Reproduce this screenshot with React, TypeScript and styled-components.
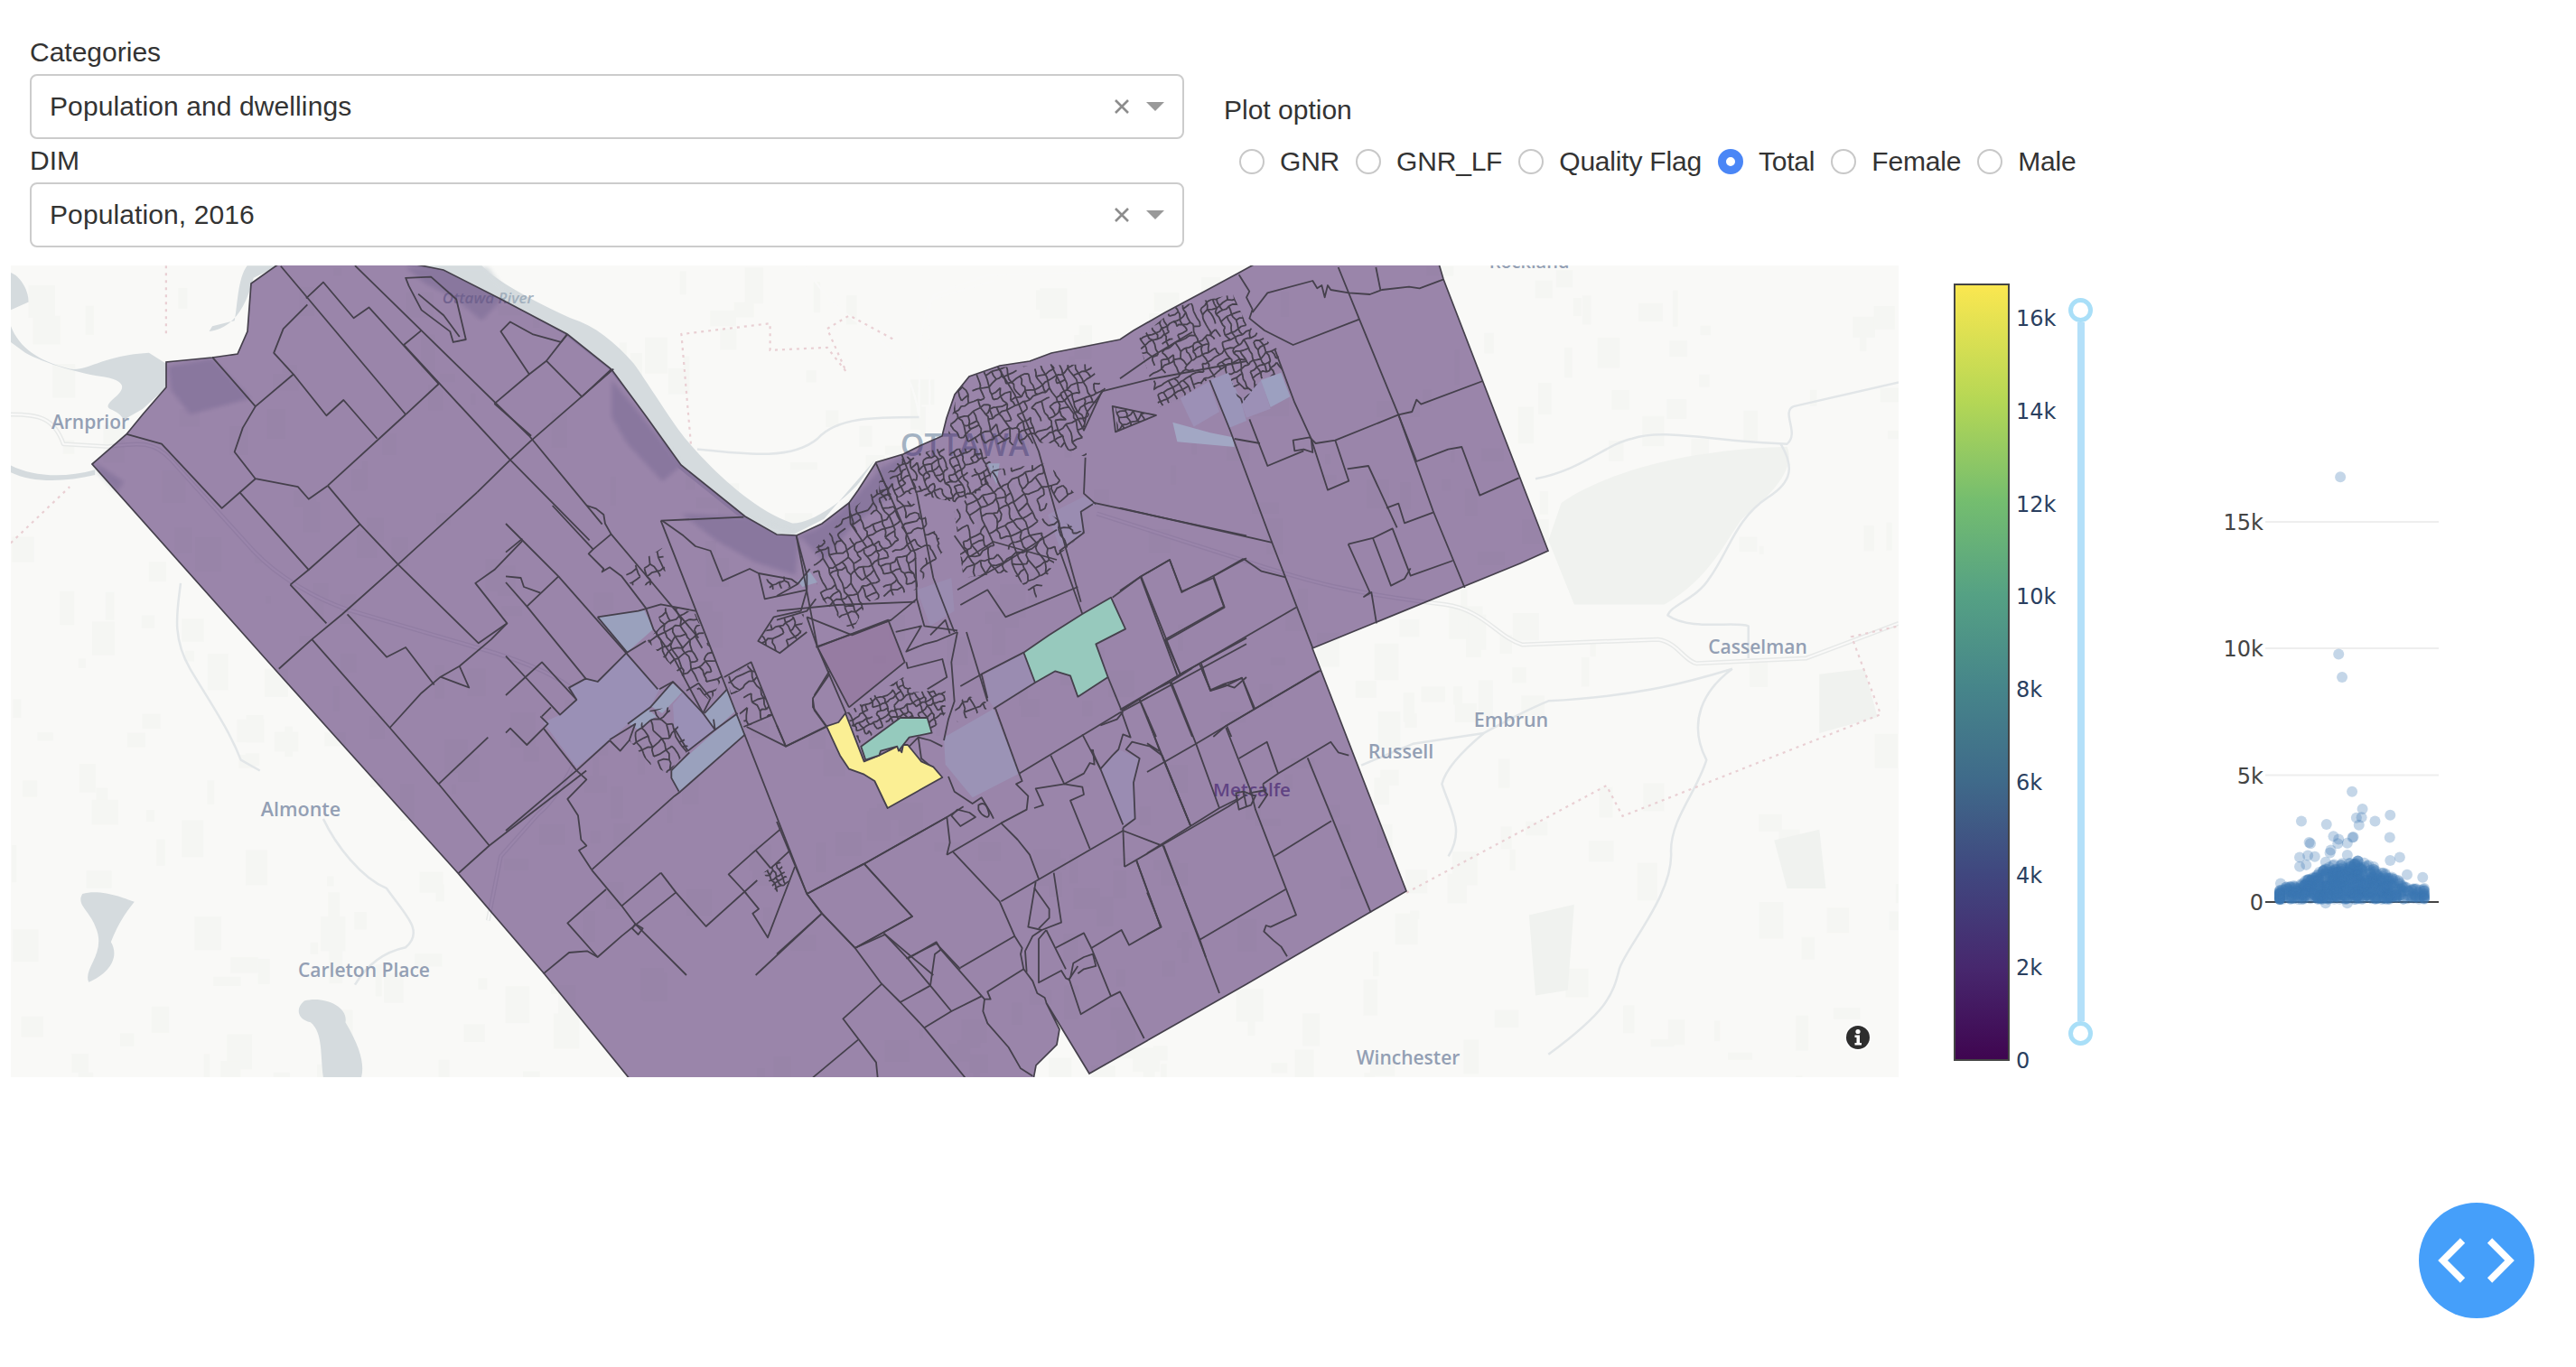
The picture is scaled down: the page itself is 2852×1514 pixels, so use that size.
import React from "react";
import styled, { createGlobalStyle } from "styled-components";

const GlobalStyle = createGlobalStyle`
  html, body { margin: 0; padding: 0; background: #fff; }
  body { font-family: "Liberation Sans", Arial, sans-serif; color: #333; }
`;

const Page = styled.div`
  width: 2852px;
  height: 1514px;
  padding-top: 34px;
  box-sizing: border-box;
  overflow: hidden;
`;

const Controls = styled.div`
  display: flex;
  height: 260px;
`;

const DropdownColumn = styled.div`
  width: 1278px;
  margin-left: 33px;
`;

const FieldLabel = styled.div`
  font-size: 30px;
  line-height: 48px;
  color: #333;
`;

const Select = styled.div`
  height: 72px;
  box-sizing: border-box;
  border: 2px solid #ccc;
  border-radius: 8px;
  display: flex;
  align-items: center;
  padding-left: 20px;
  padding-right: 20px;
  font-size: 30px;
  color: #333;
`;

const SelectValue = styled.span`
  flex: 1;
  letter-spacing: 0.1px;
`;

const ClearIcon = styled.svg`
  width: 18px;
  height: 18px;
  margin-right: 18px;
`;

const Caret = styled.span`
  width: 0;
  height: 0;
  border-left: 10px solid transparent;
  border-right: 10px solid transparent;
  border-top: 10px solid #999;
`;

const OptionColumn = styled.div`
  margin-left: 44px;
  padding-top: 64px;
`;

const RadioRow = styled.div`
  display: flex;
  align-items: center;
  height: 40px;
  margin-top: 13px;
  padding-left: 17px;
`;

const RadioLabel = styled.label`
  display: flex;
  align-items: center;
  column-gap: 17px;
  margin-right: 18px;
  font-size: 30px;
  letter-spacing: -0.2px;
  color: #333;
`;

const RadioInput = styled.input`
  appearance: none;
  width: 28px;
  height: 28px;
  margin: 0;
  border-radius: 50%;
  border: 2px solid #c8c8c8;
  background: #fff;
  box-sizing: border-box;
  &:checked {
    border: 9px solid #4a86f6;
    background: #fff;
  }
`;

const PlotRow = styled.div`
  display: flex;
  height: 899px;
  margin-left: 12px;
`;

const MapFigure = styled.div`
  position: relative;
  width: 2090px;
  height: 899px;
  flex: none;
`;

const MapSvg = styled.svg`
  display: block;
  width: 2090px;
  height: 899px;
`;

const InfoBadge = styled.svg`
  position: absolute;
  right: 30px;
  bottom: 29px;
  width: 30px;
  height: 30px;
`;

const Colorbar = styled.svg`
  flex: none;
  width: 127px;
  height: 899px;
  margin-left: 61px;
`;

const VerticalSlider = styled.div`
  flex: none;
  width: 27px;
  height: 828px;
  margin-top: 36px;
  display: flex;
  flex-direction: column;
  align-items: center;
`;

const SliderHandle = styled.span`
  width: 27px;
  height: 27px;
  flex: none;
  box-sizing: border-box;
  border: 5px solid #a9dff8;
  border-radius: 50%;
  background: #fff;
`;

const SliderTrack = styled.span`
  width: 8px;
  flex: 1;
  background: #b4e0f9;
`;

const StripSvg = styled.svg`
  flex: none;
  width: 280px;
  height: 899px;
  margin-left: 133px;
`;

const AxisText = styled.text<{ $color: string }>`
  font-family: "DejaVu Sans", Verdana, sans-serif;
  font-size: 24px;
  fill: ${(p) => p.$color};
`;

const MapLabel = styled.text<{ $size: number; $color?: string }>`
  font-family: "Open Sans", "Liberation Sans", sans-serif;
  font-weight: 600;
  font-size: ${(p) => p.$size}px;
  fill: ${(p) => p.$color || "#939fb4"};
  text-anchor: middle;
`;

const DistrictLines = styled.g`
  path, polygon {
    fill: none;
    stroke: #45404c;
    stroke-width: 1.8;
    stroke-linejoin: round;
    vector-effect: non-scaling-stroke;
  }
`;

const RoadLines = styled.g`
  path {
    fill: none;
    stroke: #e7e9e8;
    stroke-width: 5;
    stroke-linejoin: round;
    vector-effect: non-scaling-stroke;
  }
  path + path {
    stroke: #f9f9f8;
    stroke-width: 2;
  }
`;

const WaterLines = styled.g`
  path {
    fill: none;
    stroke: #e2e6e8;
    stroke-width: 2.5;
    stroke-linejoin: round;
    vector-effect: non-scaling-stroke;
  }
`;

const BorderLines = styled.g`
  path {
    fill: none;
    stroke: #e9cfd3;
    stroke-width: 2.2;
    stroke-dasharray: 3 5;
    vector-effect: non-scaling-stroke;
  }
`;

const SoftWater = styled.g`
  fill: #d5dbde;
  filter: blur(4px);
`;

const DashButton = styled.div`
  position: fixed;
  right: 46px;
  bottom: 54px;
  width: 128px;
  height: 128px;
  border-radius: 50%;
  background: #459ffa;
`;

const DashIcon = styled.svg`
  display: block;
  width: 128px;
  height: 128px;
`;

type Pt = number[];

const rng = (seed: number) => () => {
  seed = (seed + 0x6d2b79f5) | 0;
  let t = Math.imul(seed ^ (seed >>> 15), 1 | seed);
  t = (t + Math.imul(t ^ (t >>> 7), 61 | t)) ^ t;
  return ((t ^ (t >>> 14)) >>> 0) / 4294967296;
};

// coordinates below were read off crops of the map at different scales
const T_WEST = "translate(0 290) scale(0.70175 0.59312)";
const T_EAST = "translate(1000 290) scale(0.71429 0.59312)";
const crop = (x: number, y: number) => `translate(${x} ${y}) scale(0.33333)`;
const toReal = (x0: number, y0: number, pts: Pt[]) => pts.map(([x, y]) => [x0 + x / 3, y0 + y / 3]);

const OUTLINE = "102,514 140,481 158,459 184,429 184,401 235,396 263,392 274,367 278,314 309,292 456,292 491,299 554,331 628,370 677,409 716,462 754,515 825,572 860,592 882,593 910,580 940,557 950,543 970,512 1000,503 1020,493 1043,483 1048,463 1057,437 1073,417 1107,405 1140,400 1164,391 1240,376 1255,366 1290,346 1333,323 1370,303 1390,292 1593,292 1598,309 1714,610 1683,624 1453,718 1557,987 1380,1090 1206,1189 1158,1110 1173,1140 1170,1157 1147,1180 1144,1196 698,1196 603,1079 507,967 305,742";

const WEST_LINES = [
  "M443 8L640 285", "M560 7L835 325L950 490", "M665 128L637 155L805 370L930 520", "M753 430L805 370L837 335L968 200",
  "M780 265L835 210L790 130L805 112L840 135L885 150L895 135", "M835 210L862 185L918 252L965 200", "M862 185L895 135", "M780 265L838 325",
  "M483 68L510 38L558 105L582 85L692 228L640 285", "M485 80L447 125L432 170L463 210L403 270L335 178", "M463 210L515 287L542 258L595 330",
  "M640 285L517 418", "M403 270L383 310L370 355L403 405L470 420L487 443L517 418", "M403 405L350 460L255 340L200 322",
  "M378 430L487 575L458 603", "M517 418L568 490L487 575", "M568 490L628 565L753 430", "M458 603L515 675", "M628 565L540 658L492 705L440 760",
  "M628 565L755 712L800 675L750 600L780 575L825 520", "M548 658L610 738L640 720L685 790", "M492 705L615 870L665 805L695 775L725 755L775 705L800 675",
  "M615 870L692 975L772 1090L723 1142", "M692 975L770 888", "M772 1090L925 950", "M695 775L740 795L725 755",
  "M640 30L680 28L720 70L735 145L715 150L710 130L665 90L645 45Z", "M660 60L700 100L725 140",
];

const CENTRE_LINES = [
  "M0 60L175 235L70 335L268 578", "M175 235L400 490L505 610", "M0 155L55 110", "M155 0L290 145L275 160L325 210L320 220L345 205L385 235L465 340L490 410L560 510L655 690",
  "M270 0L300 10L325 30L330 60L350 95L460 225L640 440", "M290 145L350 95", "M0 235L50 240L60 270L115 290", "M0 255L70 335",
  "M0 500L65 570L120 520L235 645L180 695L65 570L0 630", "M120 700L150 670", "M115 700L140 725L70 795L15 740L0 755",
  "M235 645L210 605L265 575L305 585L400 490", "M125 740L235 880L0 1080", "M235 880L268 910L205 975L240 1030L250 1110L268 1130L243 1145L285 1210",
  "M285 1210L560 965L580 950L795 760", "M400 490L465 450", "M345 780L235 880", "M345 778L430 725L410 780", "M345 780L380 815L410 780",
  "M405 725L480 670L555 585L590 620L655 690L695 745L605 815L560 740", "M600 615L640 590L680 640L655 690", "M510 610L555 585", "M735 610L660 690",
  "M695 745L770 690", "M690 710L695 745", "M550 880L610 820", "M550 880L550 905L575 950", "M305 370L440 350L515 328L630 350", "M305 370L405 490",
  "M285 1210L385 1330L430 1390L600 1560", "M333 1275L205 1387L305 1500L385 1430L565 1285L665 1398L835 1245", "M515 1220L385 1330", "M515 1220L565 1285",
  "M1000 1290L1050 1355L1160 1470L1350 1365L1190 1190", "M1050 1355L830 1560", "M1160 1470L1260 1425L1420 1560", "M1330 1505L1430 1455L1510 1540",
  "M125 1555L210 1485L270 1480L305 1500", "M430 1390L455 1405L440 1425L420 1405Z", "M912 1075L830 1145L740 1225L800 1290", "M830 1145L880 1205",
  "M945 1145L880 1205", "M960 1200L870 1435L820 1355L840 1340L795 1285", "M515 50L1000 1290L1190 1190L1465 1035", "M515 50L790 38",
  "M520 50L590 100L630 135L680 150L720 250L810 210L840 225L860 310L1000 280", "M840 225L950 245L970 260", "M965 100L1000 230L1000 280L980 350L890 370L838 450L910 490L1000 420",
  "M965 100L1035 470L1140 670", "M1035 470L1270 380L1325 520L1140 670", "M1075 560L1020 640L1020 670L1065 733", "M800 735L930 800L1065 733", "M885 695L930 800",
  "M725 570L815 520L885 695L790 735",
];

const CITY_LINES = [
  "M380 860L465 790L490 880L600 895", "M395 900L480 880L430 965L490 940L530 930L600 900", "M510 910L560 860L575 905", "M430 1000L435 1020L550 990L565 1050L500 1090",
  "M600 900L580 1000L590 1130L570 1190L555 1260", "M1050 470L1560 580", "M1050 475L1010 500L1020 570L940 630L1015 840", "M610 1080L680 1040L820 968", "M680 1040L700 1120",
  "M720 1155L858 1068", "M1100 1050L1145 1160", "M1340 1040L1290 925L1485 815L1450 720L1345 765L1305 660L1210 715L1115 785", "M1210 715L1340 1040", "M1450 715L1560 655",
  "M1410 1005L1440 1095L1490 1075L1520 1085L1560 1050", "M1560 920L1340 1040L1145 1160", "M630 900L700 1130", "M465 440L520 720L590 900", "M415 310L465 440",
  "M735 20L790 110L870 300L1010 800", "M910 10L1020 230L1080 100", "M240 470L245 540L300 620", "M330 340L460 640L465 790", "M100 850L250 910L380 860",
  "M100 850L135 950L230 1170", "M0 830L200 810L460 800", "M0 860L100 830L130 790", "M590 580L640 650L720 600L930 660", "M600 760L740 680L930 560",
  "M610 810L700 760L760 850L1000 750", "M1560 0L1240 60L1080 100", "M0 780L70 740L110 690", "M130 950L380 860", "M1115 150L1125 235L1260 180Z",
  "M1025 320L1020 440L1060 475", "M1090 90L1030 170L1020 220",
];

const SOUTH_LINES = [
  "M120 165L125 200L165 255", "M175 70L125 150", "M0 250L30 320L165 255", "M100 810L290 710L565 555L620 520", "M100 810L0 570",
  "M100 810L150 875L260 990L345 1105L410 1170L490 1255L625 1420", "M150 875L0 1010", "M260 990L450 885L290 710", "M350 1108L220 1225L330 1370L335 1420", "M270 1295L120 1420",
  "M355 940L435 1025L510 1115L580 1200L490 1255", "M435 1025L530 970L545 995L690 1160L710 1160L700 1135L820 1060", "M545 995L525 1010L510 1115L410 1170", "M610 1055L790 950",
  "M580 1200L680 1150", "M690 1160L685 1200L700 1240L770 1320L810 1390L850 1415", "M585 670L740 835L790 950L815 990L810 1010L820 1060L850 1100L865 1140L890 1155L895 1170",
  "M565 680L720 590L745 575L800 630L840 680L870 760", "M565 555L575 640L565 680", "M745 835L865 765L1150 600L1280 650", "M860 770L835 920L880 930L945 905L920 740",
  "M855 790L905 860L905 890L870 925", "M880 930L850 950L825 1000L830 1070", "M895 930L870 960L870 1105L945 1065L960 1090L970 1095L1000 1050", "M895 930L960 1060",
  "M925 990L1020 940L1045 990L1145 930L1170 980L1275 920L1195 700", "M1045 990L1110 1150L1010 1210L970 1090", "M1110 1150L1140 1135L1220 1290", "M975 1090L985 1040L1020 1020L1050 1010L1060 1050L1020 1060L1000 1075",
  "M745 575L830 530L835 485L795 445L815 435L805 410", "M805 410L1145 205", "M805 410L725 190", "M1145 205L1560 -20", "M910 350L955 445L1020 410L1040 375L1055 380L1050 330",
  "M955 445L1015 455L1020 480L975 500L1040 660", "M855 525L885 515L860 460L955 445", "M1015 280L1075 395L1150 580", "M1045 330L1075 395L1115 350L1135 330L1150 280L1175 290L1145 205",
  "M1075 250L1130 230L1150 205", "M1150 590L1190 560L1185 440L1205 360L1160 330L1180 305L1240 320L1280 350L1375 585", "M1155 720L1150 590", "M1155 720L1500 520L1560 480",
  "M1205 165L1375 585", "M1285 650L1470 1140", "M1195 700L1275 920", "M570 420L590 470L650 510L680 490L710 540L720 560",
  "M670 515C690 500 700 520 705 545C705 565 680 550 670 530Z", "M580 550L600 530L640 540L660 555L610 585Z", "M440 320L470 290L510 300L550 320", "M470 290L480 360L510 385",
];

const EAST_LINES = [
  "M0 370L100 300L240 215", "M395 25L430 80L420 100L440 140L430 170L480 210L575 258L795 173", "M440 150L490 85L640 45L655 70L670 60L680 100L690 60L700 75L760 85L830 90L870 75L960 65L995 70L1075 40",
  "M725 0L795 173L925 490L1040 810L1145 1065", "M850 0L865 75", "M1205 378L1000 455L985 440L970 480L925 490L715 575L650 585L630 565L575 575L580 610L610 605L640 615L635 570",
  "M515 275L580 450L635 570L690 740L760 710L715 575", "M755 670L825 660L920 865", "M925 490L985 645L1090 605L1135 597L1195 758L1325 700", "M885 800L925 785L945 850L1040 815",
  "M758 920L840 900L905 868L965 1025L1105 975", "M840 900L900 1058L945 1035L965 1000", "M758 920L830 1080L810 1095L835 1080L852 1183", "M410 968L320 1020L205 1080L165 972L68 1028L190 1355",
  "M68 1028L0 1075", "M410 968L470 1010L550 1030", "M310 1025L347 1130L155 1240", "M298 375L365 540L505 915L640 1265", "M0 800L505 915", "M430 505L490 660L610 610",
  "M380 570L465 585", "M585 1130L0 1470", "M665 1340L350 1525L310 1560", "M265 1320L300 1405L345 1385L405 1365L445 1470", "M165 1375L240 1560", "M65 1435L120 1560", "M355 1525L370 1560",
];

const METCALFE_LINES = [
  "M180 0L212 75L260 60L315 32L358 135", "M570 10L358 135L165 250L0 345", "M80 45L162 250L240 465", "M0 160L40 270L145 525", "M0 250L40 275",
  "M262 198L345 410L360 470L495 820L410 860L395 855L388 875L420 905L445 925L465 958", "M305 300L398 245L435 350", "M385 385L435 350L610 245L635 280L670 290",
  "M533 298L743 812", "M612 508L423 625", "M460 735L175 902L195 960", "M0 615L240 465L300 435L295 415L320 410L360 425L345 455L330 460L305 470L295 420",
  "M385 385L390 410L400 420L370 465", "M52 588L175 902", "M0 745L47 860L0 885", "M80 45L0 85", "M150 0L80 45", "M320 410L330 460", "M340 415L395 405",
];

const MESHES: { pts: Pt[]; cell: number; seed: number }[] = [
  { pts: toReal(860, 400, [[570, 240], [600, 100], [650, 50], [730, 20], [1040, 10], [1085, 95], [1020, 210], [1030, 320], [900, 270], [780, 280], [640, 270]]), cell: 9, seed: 11 },
  { pts: toReal(860, 400, [[340, 400], [420, 320], [540, 290], [680, 290], [720, 350], [700, 420], [600, 470], [450, 440], [340, 470]]), cell: 7, seed: 12 },
  { pts: toReal(860, 400, [[130, 620], [240, 500], [340, 420], [470, 480], [560, 620], [460, 760], [300, 800], [250, 900], [150, 790], [120, 700]]), cell: 9.5, seed: 13 },
  { pts: toReal(860, 400, [[590, 500], [720, 360], [900, 340], [990, 440], [890, 500], [1020, 570], [930, 650], [860, 790], [780, 700], [620, 720]]), cell: 10.5, seed: 14 },
  { pts: toReal(860, 400, [[230, 1170], [420, 1050], [455, 1100], [560, 1090], [560, 1170], [515, 1230], [450, 1190], [380, 1200], [275, 1270]]), cell: 7, seed: 15 },
  { pts: toReal(860, 400, [[1125, 150], [1260, 180], [1130, 235]]), cell: 8, seed: 16 },
  { pts: toReal(1240, 296, [[90, 340], [60, 240], [190, 130], [375, 90], [420, 190], [520, 270], [540, 350], [470, 370], [400, 460], [360, 350], [290, 375], [210, 430], [130, 465]]), cell: 8, seed: 17 },
  { pts: toReal(560, 560, [[500, 340], [575, 340], [630, 360], [720, 570], [680, 650], [580, 560], [470, 450], [515, 400]]), cell: 10, seed: 18 },
  { pts: toReal(560, 560, [[735, 570], [815, 525], [885, 695], [800, 735], [750, 640]]), cell: 11, seed: 19 },
  { pts: toReal(560, 560, [[410, 780], [480, 680], [540, 670], [610, 810], [570, 850], [540, 890], [480, 860]]), cell: 11, seed: 20 },
  { pts: toReal(560, 560, [[385, 235], [440, 190], [520, 140], [530, 220], [480, 265], [420, 265]]), cell: 10, seed: 21 },
  { pts: toReal(560, 560, [[840, 450], [890, 380], [990, 360], [980, 430], [910, 490]]), cell: 10, seed: 22 },
  { pts: toReal(560, 560, [[860, 245], [930, 235], [955, 270], [880, 280]]), cell: 9, seed: 23 },
  { pts: toReal(560, 560, [[855, 1220], [910, 1180], [940, 1250], [900, 1285]]), cell: 6, seed: 24 },
  { pts: toReal(860, 720, [[590, 190], [630, 150], [690, 170], [720, 185], [600, 240]]), cell: 11, seed: 25 },
];

// tangled street blocks: a jittered lattice along the city's road axes, with edges dropped at random
const meshPath = ({ pts, cell, seed }: { pts: Pt[]; cell: number; seed: number }) => {
  const r = rng(seed);
  const xs = pts.map((p) => p[0]);
  const ys = pts.map((p) => p[1]);
  const cx = (Math.min(...xs) + Math.max(...xs)) / 2;
  const cy = (Math.min(...ys) + Math.max(...ys)) / 2;
  const n = Math.ceil(Math.max(Math.max(...xs) - Math.min(...xs), Math.max(...ys) - Math.min(...ys)) / cell);
  const grid: Pt[][] = [];
  for (let i = 0; i <= 2 * n; i++) {
    grid[i] = [];
    for (let j = 0; j <= 2 * n; j++) {
      const a = (i - n) * cell;
      const b = (j - n) * cell;
      grid[i][j] = [cx + a * 0.88 + b * 0.4 + (r() - 0.5) * cell * 0.55, cy - a * 0.47 + b * 0.92 + (r() - 0.5) * cell * 0.55];
    }
  }
  let d = "";
  const seg = (p: Pt, q: Pt) => {
    const mx = (p[0] + q[0]) / 2 + (r() - 0.5) * cell * 0.35;
    const my = (p[1] + q[1]) / 2 + (r() - 0.5) * cell * 0.35;
    d += `M${p[0].toFixed(1)} ${p[1].toFixed(1)}L${mx.toFixed(1)} ${my.toFixed(1)}L${q[0].toFixed(1)} ${q[1].toFixed(1)}`;
  };
  for (let i = 0; i < 2 * n; i++) {
    for (let j = 0; j < 2 * n; j++) {
      if (r() < 0.74) seg(grid[i][j], grid[i + 1][j]);
      if (r() < 0.74) seg(grid[i][j], grid[i][j + 1]);
    }
  }
  return d;
};

const farmRand = rng(7);
const FARM_PATCHES = Array.from({ length: 420 }, () => ({
  x: 12 + farmRand() * 2090,
  y: 294 + farmRand() * 899,
  w: 5 + farmRand() * 26,
  h: 8 + farmRand() * 34,
}));

const OffsetLines: React.FC<{ transform: string; lines: string[] }> = ({ transform, lines }) => (
  <DistrictLines transform={transform}>
    {lines.map((d) => (
      <path key={d} d={d} />
    ))}
  </DistrictLines>
);

const HWY_WEST = "M17 285C60 285 85 290 100 340L170 345C210 340 240 330 270 370L400 540C440 590 500 630 550 650L780 730C860 760 930 800 930 850C920 920 880 1000 850 1030L790 1110L770 1230";
const HWY_EAST = "M300 470L560 570C640 600 700 620 840 640C900 650 920 700 960 715L1170 705C1200 710 1210 745 1230 750L1400 740L1543 675";
const ROAD_NORTH = "M1268 7C1290 40 1300 70 1350 110C1400 150 1440 200 1450 290C1450 200 1450 100 1470 70L1568 35";

const BaseMap = () => (
  <>
    <rect x="12" y="294" width="2090" height="899" fill="#f9f9f7" />
    <g fill="#f5f6f3">
      {FARM_PATCHES.map((f, i) => (
        <rect key={i} x={f.x} y={f.y} width={f.w} height={f.h} />
      ))}
    </g>
    <g transform={T_EAST} fill="#f0f2ef">
      <path d="M1020 450C1080 400 1200 350 1370 345C1385 390 1340 440 1300 480C1270 530 1250 590 1180 640L1040 640L1000 520Z" />
      <path d="M1350 1080L1420 1060L1430 1170L1370 1170Z" />
      <path d="M1420 770L1490 760L1510 850L1420 880Z" />
      <path d="M970 1220L1040 1200L1030 1360L980 1370Z" />
    </g>
    <g transform={T_WEST} fill="#d5dbde">
      <path d="M17 120C30 160 60 185 110 200C140 205 160 175 235 170L262 190L262 235L225 275L195 295C185 270 160 280 175 260C190 245 210 225 165 215C130 210 70 190 40 170L17 150Z" />
      <path d="M17 20C30 25 45 50 45 75L17 90Z" />
      <path d="M330 130C360 125 385 100 400 30L440 7L390 7C375 30 375 80 370 110L335 120Z" />
      <path d="M640 7L760 7C780 30 810 55 900 105C940 120 970 150 1000 190C1030 240 1060 300 1085 335C1110 370 1180 460 1250 488C1280 490 1340 440 1360 405L1380 370L1300 480L1250 510L1170 480L1070 385L1020 290L960 200L890 135L790 70L700 20Z" />
      <path d="M130 1180C160 1170 200 1190 212 1195C195 1220 185 1240 175 1270C190 1300 170 1330 140 1345C130 1320 170 1290 150 1240C140 1210 120 1200 130 1180Z" />
      <path d="M480 1380C510 1370 550 1390 545 1420C570 1470 575 1500 570 1523L510 1523C505 1480 510 1440 490 1420C470 1415 465 1395 480 1380Z" />
      <path d="M17 380C50 400 100 405 150 388L150 398C100 412 50 412 17 393Z" />
    </g>
    <SoftWater transform={T_WEST}>
      <path d="M640 10L770 10L800 60L760 110L720 70L670 40Z" />
      <path d="M965 220L1000 270L1075 380L1045 410L990 340L965 290Z" />
      <path d="M1075 470L1180 478L1260 510L1255 585L1190 560L1130 520Z" />
      <path d="M150 375L195 410L185 430L155 395Z" />
      <path d="M265 195L335 180L395 255L300 285L270 240Z" />
      <path d="M1260 510C1300 505 1350 440 1390 385L1430 360L1400 440L1340 500L1300 560Z" />
    </SoftWater>
    <RoadLines transform={T_WEST}>
      <path d={HWY_WEST} />
      <path d={HWY_WEST} />
      <path d={ROAD_NORTH} />
      <path d={ROAD_NORTH} />
    </RoadLines>
    <RoadLines transform={T_EAST}>
      <path d={HWY_EAST} />
      <path d={HWY_EAST} />
      <path d="M40 290C45 200 30 80 50 60L130 25L430 15" />
      <path d="M40 290C45 200 30 80 50 60L130 25L430 15" />
    </RoadLines>
    <WaterLines transform={T_EAST}>
      <path d="M980 405C1050 390 1090 340 1130 330C1180 310 1250 335 1370 340C1390 320 1360 280 1380 270L1543 225" />
      <path d="M1360 340C1380 380 1380 410 1340 440C1290 480 1280 540 1250 590C1230 630 1190 640 1185 660C1220 690 1290 670 1310 680L1310 740" />
      <path d="M1285 760C1230 780 1150 810 1000 820C960 840 930 860 900 880C860 920 840 950 835 975C850 1030 870 1060 845 1110" />
      <path d="M1285 760C1240 800 1215 860 1245 930C1230 990 1190 1040 1190 1100C1195 1180 1120 1280 1110 1320C1100 1370 1090 1400 1000 1480" />
      <path d="M900 880L790 900L710 940" />
    </WaterLines>
    <WaterLines transform={T_WEST}>
      <path d="M510 1040C530 1090 570 1150 610 1170C640 1220 670 1250 640 1280C600 1290 575 1320 560 1350" />
      <path d="M285 600C280 650 270 700 300 760C330 820 360 870 380 930L410 950" />
      <path d="M1450 290C1380 290 1320 290 1290 330C1250 370 1180 360 1100 350" />
    </WaterLines>
    <BorderLines transform={T_EAST}>
      <path d="M780 1178L1090 978L1115 1035L1515 845L1470 700L1543 680" />
    </BorderLines>
    <BorderLines transform={T_WEST}>
      <path d="M17 525L110 420" />
      <path d="M262 7L262 140" />
      <path d="M1090 340L1075 135L1215 115L1215 165L1305 160L1335 205L1305 125L1340 100L1410 145" />
    </BorderLines>
    <MapLabel x="100" y="475" $size={21}>Arnprior</MapLabel>
    <MapLabel x="333" y="904" $size={21.5}>Almonte</MapLabel>
    <MapLabel x="403" y="1082" $size={21}>Carleton Place</MapLabel>
    <MapLabel x="540" y="336" $size={17} $color="#a2b0bd" fontStyle="italic">Ottawa River</MapLabel>
    <MapLabel x="1946" y="724" $size={21}>Casselman</MapLabel>
    <MapLabel x="1673" y="805" $size={21.5}>Embrun</MapLabel>
    <MapLabel x="1551" y="840" $size={21.5}>Russell</MapLabel>
    <MapLabel x="1386" y="882" $size={20.5} $color="#7f70a6">Metcalfe</MapLabel>
    <MapLabel x="1559" y="1179" $size={21}>Winchester</MapLabel>
    <MapLabel x="1693" y="297" $size={20}>Rockland</MapLabel>
    <MapLabel x="1068" y="505" $size={34} $color="#a3b2c2">OTTAWA</MapLabel>
  </>
);

const ChoroplethMap = () => (
  <MapSvg viewBox="12 294 2090 899">
    <BaseMap />
    <polygon points={OUTLINE} fill="rgb(68,26,100)" fillOpacity="0.52" />

    <g transform={crop(560, 560)} fill="#9aa1bd">
      <polygon points="305,370 460,348 490,410 400,490" />
      <polygon points="660,690 735,610 765,680 695,745" />
      <polygon points="550,880 695,750 770,690 795,760 575,950 550,905" />
      <polygon fill="#9a90b6" points="125,720 180,695 235,640 210,605 265,575 310,580 400,490 510,610 480,670 405,725 345,780 235,870" />
      <polygon fill="#9a90b6" points="590,620 655,690 695,745 605,815 560,740 555,660" />
      <polygon fill="#9aa1bd" points="480,665 555,590 585,620 520,690" />
      <polygon fill="#9aa1bd" points="410,725 470,675 500,700 440,745" />
      <polygon fill="#927199" fillOpacity="0.45" points="1035,470 1270,380 1325,520 1140,670" />
    </g>
    <g transform={crop(860, 400)} fill="#9a8cb1">
      <polygon points="465,760 580,720 590,830 510,880" />
      <polygon points="900,510 1020,450 1060,475 1010,500 1020,570 940,620" />
      <polygon points="690,1040 820,968 858,1068 720,1150 700,1120" />
      <polygon fill="#9b93b6" points="555,1250 720,1155 805,1370 650,1450 560,1340" />
      <polygon fill="#9aa1bd" points="700,340 740,340 730,410" />
      <polygon fill="#9aa1bd" points="70,730 110,700 135,735 85,750" />
      <polygon fill="#97c9bd" points="820,968 905,910 1015,840 1110,785 1158,890 1060,940 1100,1050 1000,1115 975,1045 925,1030 858,1068" />
    </g>
    <g transform={crop(1240, 296)} fill="#9c90b6">
      <polygon fill="#a2a7c4" points="175,515 300,550 375,565 380,597 190,580" />
      <polygon points="200,435 295,380 330,480 245,530 225,490" />
      <polygon fill="#9a95b9" points="298,375 360,350 400,440 420,510 360,535" />
      <polygon points="420,500 400,445 470,375 500,470" />
      <polygon fill="#9ca0c0" points="468,375 535,350 565,430 500,465" />
    </g>
    <g transform={crop(860, 720)} fill="#9a8cb2">
      <polygon points="1075,395 1115,350 1135,330 1205,360 1185,440 1190,560 1150,580" />
    </g>

    <DistrictLines>
      {MESHES.map((m, i) => (
        <React.Fragment key={m.seed}>
          <clipPath id={`blocks-${i}`}>
            <polygon points={m.pts.map((p) => p.join(",")).join(" ")} />
          </clipPath>
          <path d={meshPath(m)} clipPath={`url(#blocks-${i})`} />
        </React.Fragment>
      ))}
    </DistrictLines>

    <OffsetLines transform={T_WEST} lines={WEST_LINES} />
    <OffsetLines transform={crop(560, 560)} lines={CENTRE_LINES} />
    <OffsetLines transform={crop(860, 400)} lines={CITY_LINES} />
    <OffsetLines transform={crop(860, 720)} lines={SOUTH_LINES} />
    <OffsetLines transform={crop(1240, 296)} lines={EAST_LINES} />
    <OffsetLines transform={crop(1270, 740)} lines={METCALFE_LINES} />
    <polygon points={OUTLINE} fill="none" stroke="#45404c" strokeWidth="1.7" />

    <DistrictLines transform={crop(560, 560)}>
      <polygon style={{ fill: "#fbef94" }} points="1065,733 1105,720 1128,690 1190,850 1240,830 1300,800 1315,820 1320,795 1335,795 1380,850 1420,868 1450,903 1268,1005 1225,915 1190,893 1140,875 1110,830" />
      <polygon style={{ fill: "#95cabd" }} points="1180,800 1310,705 1400,705 1415,755 1340,770 1320,795 1305,815 1300,800 1245,815 1240,830 1195,845" />
    </DistrictLines>
    <DistrictLines transform={crop(860, 400)}>
      <polygon points="820,968 905,910 1015,840 1110,785 1158,890 1060,940 1100,1050 1000,1115 975,1045 925,1030 858,1068" />
    </DistrictLines>
  </MapSvg>
);

const CB_TICKS = ["16k", "14k", "12k", "10k", "8k", "6k", "4k", "2k", "0"];

const ColorScale = () => (
  <Colorbar viewBox="2163 294 127 899">
    <defs>
      <linearGradient id="viridis" x1="0" y1="1" x2="0" y2="0">
        <stop offset="0" stopColor="#3f0550" />
        <stop offset="0.12" stopColor="#47286e" />
        <stop offset="0.24" stopColor="#40477f" />
        <stop offset="0.36" stopColor="#3f6a8a" />
        <stop offset="0.48" stopColor="#46858a" />
        <stop offset="0.6" stopColor="#55a184" />
        <stop offset="0.72" stopColor="#74bd6f" />
        <stop offset="0.85" stopColor="#b5d755" />
        <stop offset="1" stopColor="#fbe750" />
      </linearGradient>
    </defs>
    <rect x="2164" y="315" width="60" height="859" fill="url(#viridis)" stroke="#444" strokeWidth="2" />
    {CB_TICKS.map((t, i) => (
      <AxisText key={t} x="2232" y={352 + i * 102.75 + 9} $color="#2a3f5f">
        {t}
      </AxisText>
    ))}
  </Colorbar>
);

const z3 = ([x, y]: Pt) => [2100 + x / 2.085, 290 + y / 1.65];
const OUTLIERS = [
  [1024, 393], [1020, 717], [1028, 759], [1051, 968], [1075, 1000], [1061, 1016], [1073, 1015], [1067, 1029], [1104, 1022], [1139, 1011], [934, 1022], [992, 1028],
  [1138, 1052], [1008, 1050], [1020, 1055], [1054, 1051], [1052, 1052], [952, 1061], [955, 1063], [1040, 1062], [1018, 1063], [1002, 1075], [1000, 1080], [1040, 1084],
  [1161, 1088], [1139, 1094], [930, 1088], [949, 1085], [965, 1087], [945, 1102], [930, 1105], [990, 1097], [1214, 1125], [1178, 1120], [886, 1136], [885, 1155], [1040, 1172], [990, 1172],
].map(z3);

const stripRand = rng(3);
const gauss = () => (stripRand() + stripRand() + stripRand() + stripRand() - 2) / 0.58;
const STRIP_POINTS = Array.from({ length: 760 }, () => {
  const x = Math.max(2524, Math.min(2684, 2600 + gauss() * 40));
  const reach = 34 * Math.exp(-(((x - 2604) / 52) ** 2)) + 9;
  return [x, 996 - Math.pow(stripRand(), 1.3) * reach];
});

const STRIP_TICKS = [
  { label: "15k", y: 578 },
  { label: "10k", y: 718 },
  { label: "5k", y: 858.5 },
];

const StripPlot = () => (
  <StripSvg viewBox="2450 294 280 899">
    {STRIP_TICKS.map((t) => (
      <g key={t.label}>
        <line x1="2508" x2="2700" y1={t.y} y2={t.y} stroke="#eeeeee" strokeWidth="2" />
        <AxisText x="2506" y={t.y + 9} textAnchor="end" $color="#444">
          {t.label}
        </AxisText>
      </g>
    ))}
    <AxisText x="2506" y="1008" textAnchor="end" $color="#444">
      0
    </AxisText>
    <line x1="2508" x2="2700" y1="999" y2="999" stroke="#444" strokeWidth="2" />
    <g fill="#3a76b2" fillOpacity="0.3">
      {[...OUTLIERS, ...STRIP_POINTS].map((p, i) => (
        <circle key={i} cx={p[0]} cy={p[1]} r="6" />
      ))}
    </g>
  </StripSvg>
);

const PLOT_OPTIONS = ["GNR", "GNR_LF", "Quality Flag", "Total", "Female", "Male"];

const Dropdown: React.FC<{ label: string; value: string }> = ({ label, value }) => (
  <>
    <FieldLabel>{label}</FieldLabel>
    <Select>
      <SelectValue>{value}</SelectValue>
      <ClearIcon viewBox="0 0 18 18">
        <path d="M2 2L16 16M16 2L2 16" stroke="#8c8c8c" strokeWidth="2.6" />
      </ClearIcon>
      <Caret />
    </Select>
  </>
);

const App: React.FC = () => (
  <Page>
    <GlobalStyle />
    <Controls>
      <DropdownColumn>
        <Dropdown label="Categories" value="Population and dwellings" />
        <Dropdown label="DIM" value="Population, 2016" />
      </DropdownColumn>
      <OptionColumn>
        <FieldLabel>Plot option</FieldLabel>
        <RadioRow>
          {PLOT_OPTIONS.map((o) => (
            <RadioLabel key={o}>
              <RadioInput type="radio" name="plot" defaultChecked={o === "Total"} />
              {o}
            </RadioLabel>
          ))}
        </RadioRow>
      </OptionColumn>
    </Controls>
    <PlotRow>
      <MapFigure>
        <ChoroplethMap />
        <InfoBadge viewBox="0 0 30 30">
          <circle cx="15" cy="15" r="14.5" fill="#fff" />
          <circle cx="15" cy="15" r="13" fill="#2e2e2e" />
          <circle cx="15" cy="8.5" r="2.6" fill="#fff" />
          <path d="M11.5 12.5H17V21H19V23.5H11.5V21H13.5V15H11.5Z" fill="#fff" />
        </InfoBadge>
      </MapFigure>
      <ColorScale />
      <VerticalSlider>
        <SliderHandle />
        <SliderTrack />
        <SliderHandle />
      </VerticalSlider>
      <StripPlot />
    </PlotRow>
    <DashButton>
      <DashIcon viewBox="0 0 128 128">
        <path d="M48.5 42L26.5 64L48.5 86M78.5 42L100.5 64L78.5 86" fill="none" stroke="#fff" strokeWidth="7.5" />
      </DashIcon>
    </DashButton>
  </Page>
);

export default App;
